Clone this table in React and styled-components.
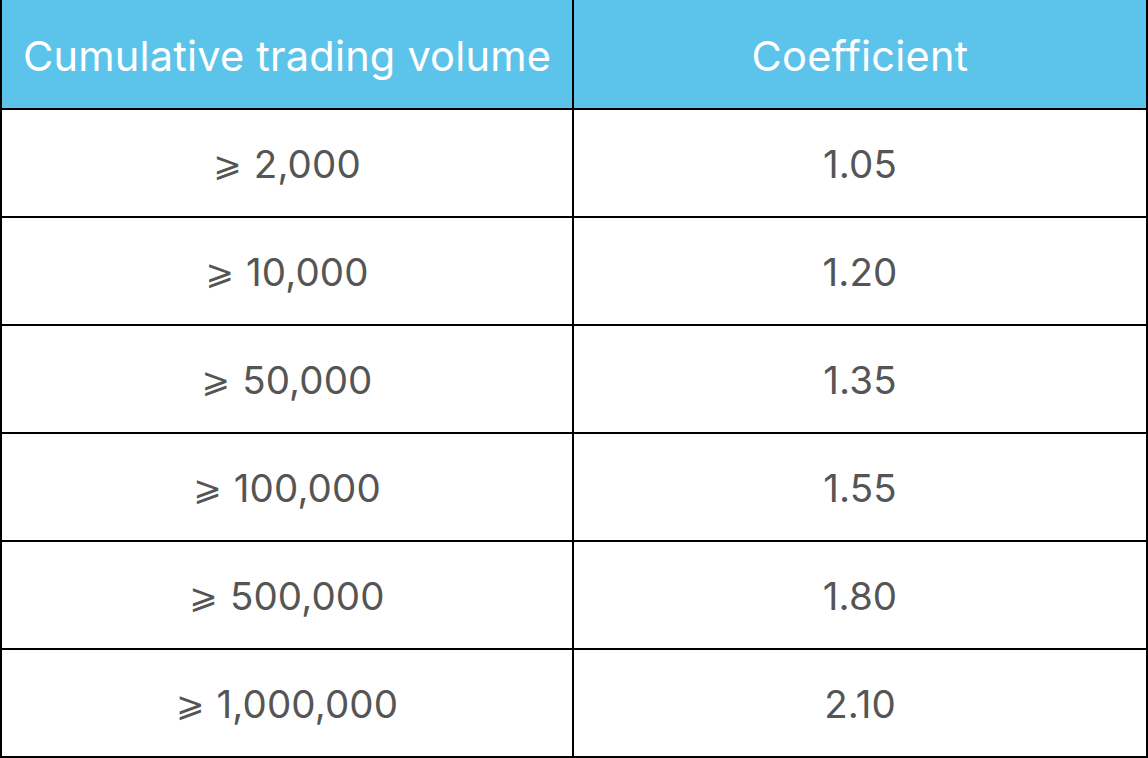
import React from "react";
import styled, { createGlobalStyle } from "styled-components";

const Global = createGlobalStyle`
  html, body { margin: 0; padding: 0; background: #ffffff; }
  body { font-family: Inter, "Noto Sans", "DejaVu Sans", sans-serif; }
`;

const Table = styled.div`
  width: 1148px;
  box-sizing: border-box;
  border-left: 2px solid #000;
  border-right: 2px solid #000;
  display: grid;
  grid-template-columns: 1fr 1fr;
  grid-auto-rows: auto;
`;

const Cell = styled.div`
  box-sizing: border-box;
  height: ${(p) => (p.$head ? 110 : 108)}px;
  display: flex;
  align-items: center;
  justify-content: center;
  border-bottom: 2px solid #000;
  border-right: ${(p) => (p.$left ? "2px solid #000" : "none")};
  background: ${(p) => (p.$head ? "#5cc4ea" : "#ffffff")};
  color: ${(p) => (p.$head ? "#ffffff" : "#555555")};
  font-size: ${(p) => (p.$head ? 41.5 : 38.5)}px;
  font-weight: 400;
  letter-spacing: ${(p) => (p.$head ? "0.2px" : "0.1px")};
  padding-top: ${(p) => (p.$head ? 4 : 2)}px;
`;

const Sign = styled.span`
  font-family: "DejaVu Sans", sans-serif;
  font-size: 34px;
  margin-right: 12px;
`;

const rows = [
  ["2,000", "1.05"],
  ["10,000", "1.20"],
  ["50,000", "1.35"],
  ["100,000", "1.55"],
  ["500,000", "1.80"],
  ["1,000,000", "2.10"],
];

export default function App() {
  return (
    <>
      <Global />
      <Table>
        <Cell $head $left>Cumulative trading volume</Cell>
        <Cell $head>Coefficient</Cell>
        {rows.map(([v, c]) => (
          <React.Fragment key={v}>
            <Cell $left>
              <Sign>⩾</Sign>
              {v}
            </Cell>
            <Cell>{c}</Cell>
          </React.Fragment>
        ))}
      </Table>
    </>
  );
}
